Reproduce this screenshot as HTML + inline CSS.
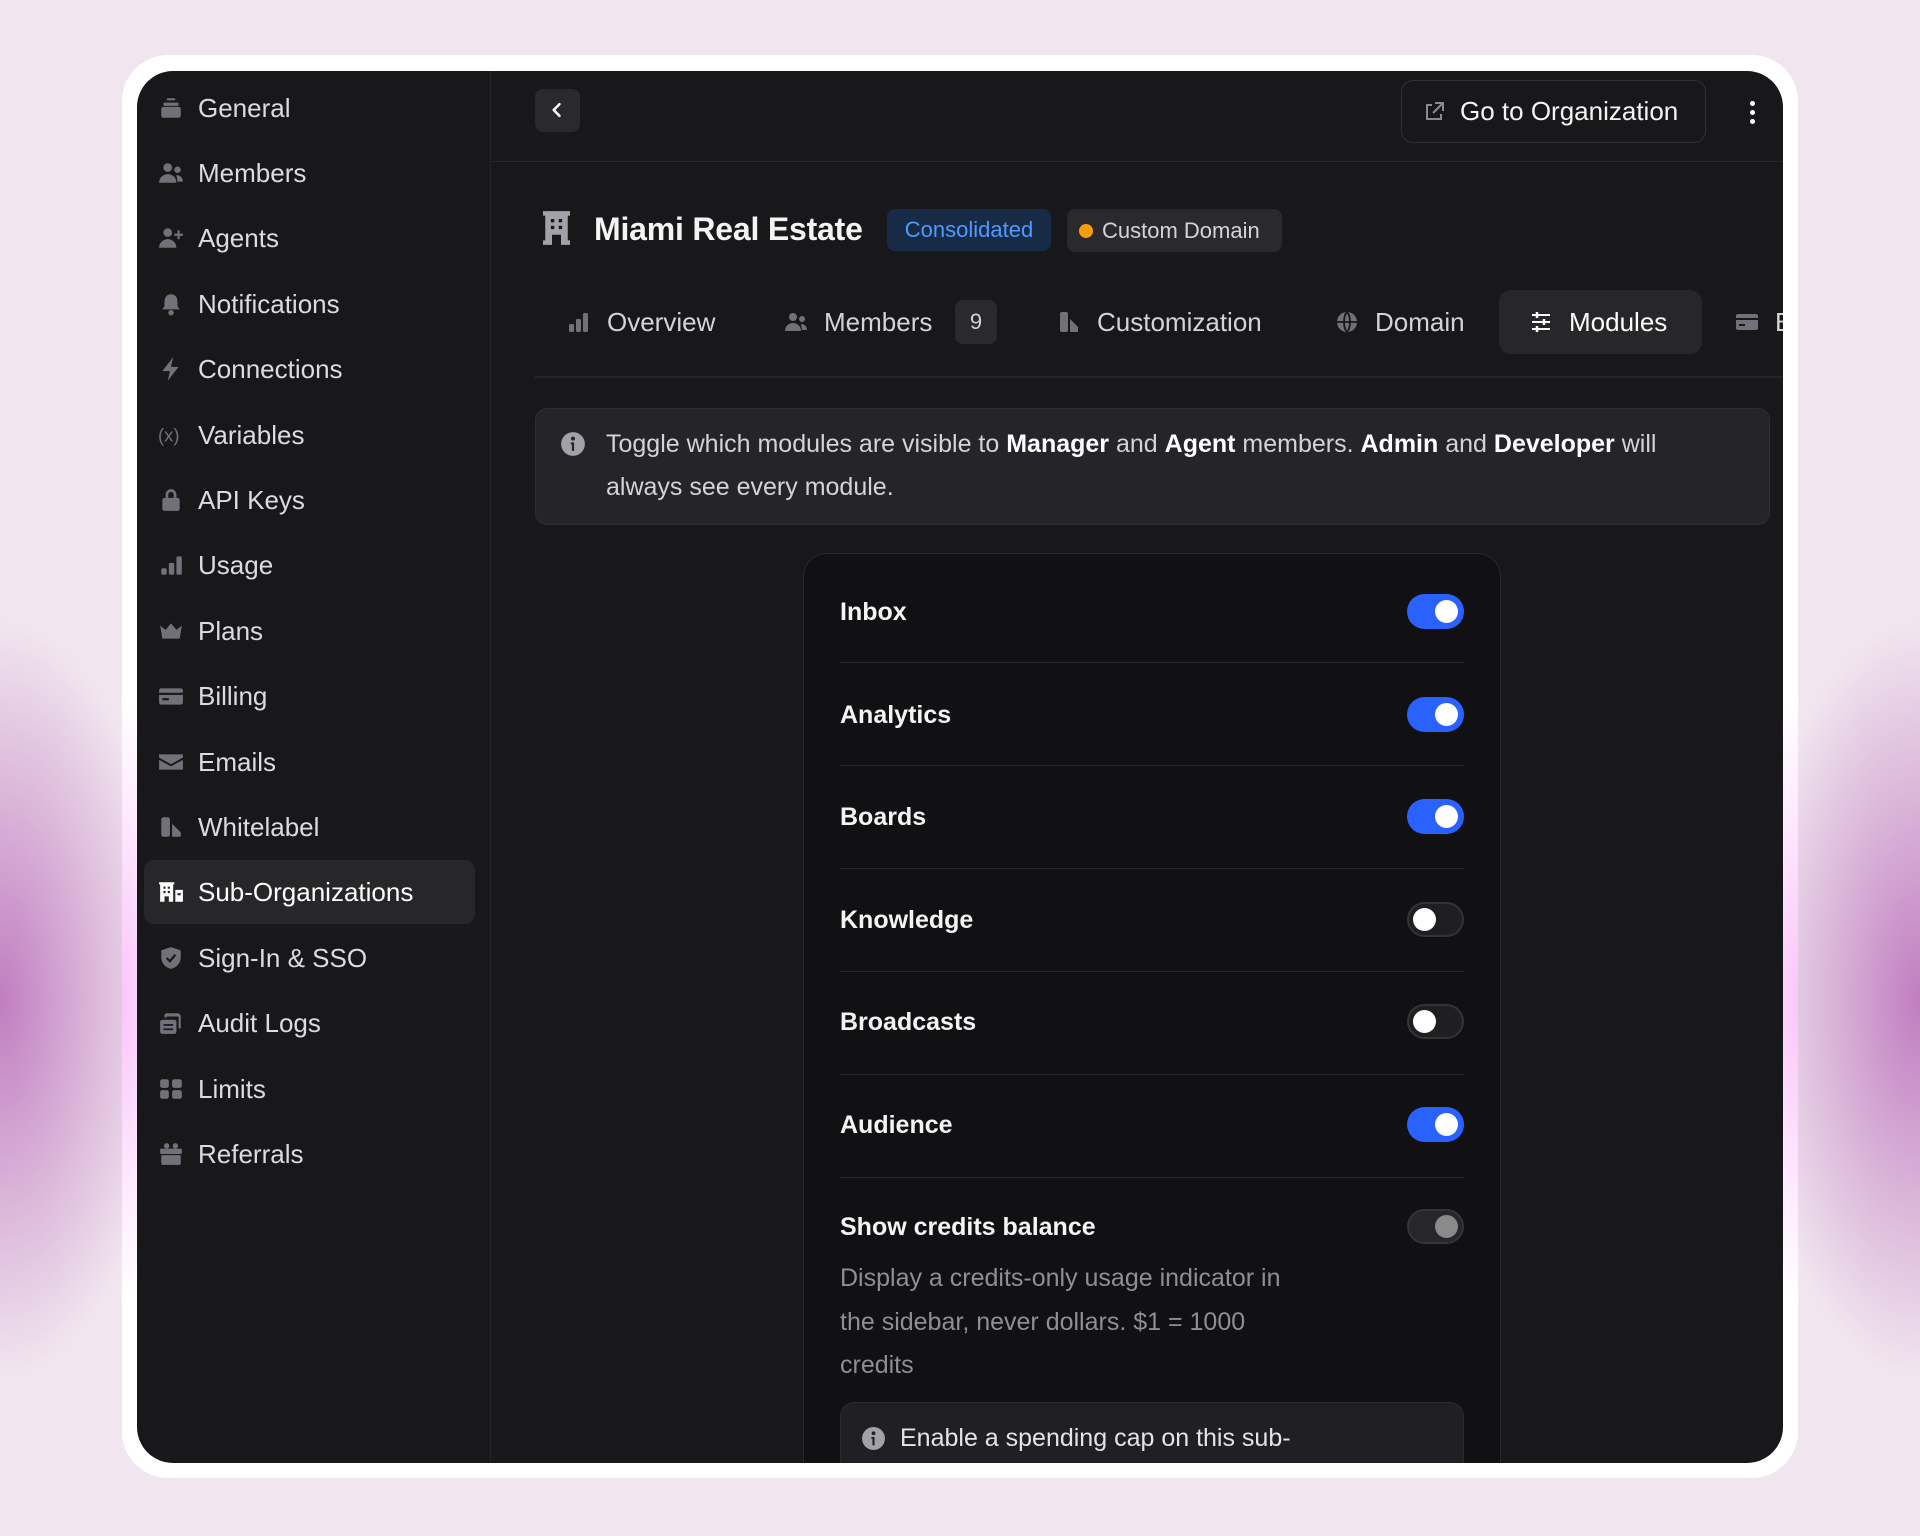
<!DOCTYPE html>
<html><head><meta charset="utf-8">
<style>
*{box-sizing:border-box;margin:0;padding:0}
html,body{width:1920px;height:1536px;overflow:hidden}
body{font-family:"Liberation Sans",sans-serif;position:relative;
background:
radial-gradient(ellipse 170px 380px at 0px 1000px, rgba(190,120,190,0.95), rgba(190,120,190,0) 100%),
radial-gradient(ellipse 170px 380px at 1920px 1000px, rgba(190,120,190,0.95), rgba(190,120,190,0) 100%),
linear-gradient(#f1e6ef,#f1e6ef);}
.card{position:absolute;left:122px;top:55px;width:1676px;height:1423px;border-radius:46px;background:#fff;}
.card:before{content:"";position:absolute;inset:0;border-radius:46px;
background:radial-gradient(ellipse 60px 300px at 0 945px,rgba(250,190,250,.9),rgba(255,255,255,0)),radial-gradient(ellipse 60px 300px at 100% 945px,rgba(250,190,250,.9),rgba(255,255,255,0));}
.panel{position:absolute;left:137px;top:71px;width:1646px;height:1392px;border-radius:36px;background:#18181b;overflow:hidden;color:#e4e4e7}
.side{position:absolute;left:0;top:0;width:354px;height:100%;border-right:1px solid #26262a}
.si{position:absolute;left:7px;width:331px;height:64px;border-radius:10px;display:flex;align-items:center;font-size:26px;color:#dcdce0}
.si svg{position:absolute;left:14px;width:26px;height:26px;fill:#71717a}
.si span{position:absolute;left:54px}
.si.act{background:#27272a;color:#fff}
.si.act svg{fill:#fff}
.abs{position:absolute}
.tab{position:absolute;top:290px;height:64px;display:flex;align-items:center;font-size:26px;color:#d4d4d8}
.tab svg{width:24px;height:24px;fill:#71717a;margin-right:16px}
.tgl{position:absolute;left:1270px;width:57px;height:35px;border-radius:18px}
.tgl.on{background:#2962ff}
.tgl.off{background:#1f1f22;border:2px solid #333338}
.tgl i{position:absolute;top:6px;width:23px;height:23px;border-radius:50%;background:#fff}
.tgl.on i{right:6px}
.tgl.off i{left:4px;top:4px}
.lbl{position:absolute;left:703px;font-size:25px;font-weight:bold;color:#f4f4f5}
.sep{position:absolute;left:703px;width:624px;height:1px;background:#27272a}
</style></head><body>
<div class="card"></div>
<div class="panel">
 <div class="side">
  <div class="si" style="top:5px"><svg viewBox="0 0 24 24"><rect x="3" y="11" width="18" height="10" rx="2"/><rect x="5" y="7" width="14" height="3" rx="1"/><rect x="8" y="3" width="8" height="2" rx="1"/></svg><span>General</span></div>
  <div class="si" style="top:70px"><svg viewBox="0 0 24 24"><circle cx="9" cy="7" r="4"/><path d="M1 21c0-5 4-8 8-8s8 3 8 8z"/><circle cx="18" cy="9" r="3"/><path d="M17 14c3 0 6 2 6 6h-5z"/></svg><span>Members</span></div>
  <div class="si" style="top:135px"><svg viewBox="0 0 24 24"><circle cx="9" cy="7" r="4"/><path d="M1 21c0-5 4-8 8-8s8 3 8 8z"/><path d="M18 5h2v3h3v2h-3v3h-2v-3h-3V8h3z"/></svg><span>Agents</span></div>
  <div class="si" style="top:201px"><svg viewBox="0 0 24 24"><path d="M12 3c4 0 6 3 6 7v4l2 3H4l2-3v-4c0-4 2-7 6-7z"/><circle cx="12" cy="20" r="2.5"/></svg><span>Notifications</span></div>
  <div class="si" style="top:266px"><svg viewBox="0 0 24 24"><path d="M14 1L4 14h7l-2 9 10-13h-7z"/></svg><span>Connections</span></div>
  <div class="si" style="top:332px"><svg viewBox="0 0 24 24"><text x="0" y="18" font-size="17" font-family="Liberation Sans" fill="#71717a">(x)</text></svg><span>Variables</span></div>
  <div class="si" style="top:397px"><svg viewBox="0 0 24 24"><rect x="4" y="10" width="16" height="12" rx="2"/><path d="M7 10V7a5 5 0 0110 0v3h-2.5V7a2.5 2.5 0 00-5 0v3z"/></svg><span>API Keys</span></div>
  <div class="si" style="top:462px"><svg viewBox="0 0 24 24"><rect x="3" y="15" width="5" height="6" rx="1.5"/><rect x="10" y="10" width="5" height="11" rx="1.5"/><rect x="17" y="4" width="5" height="17" rx="1.5"/></svg><span>Usage</span></div>
  <div class="si" style="top:528px"><svg viewBox="0 0 24 24"><path d="M2 7l5 4 5-6 5 6 5-4-2 12H4z"/></svg><span>Plans</span></div>
  <div class="si" style="top:593px"><svg viewBox="0 0 24 24"><rect x="1" y="5" width="22" height="15" rx="2"/><rect x="1" y="9" width="22" height="2" fill="#18181b"/><rect x="4" y="14" width="6" height="2" fill="#18181b"/></svg><span>Billing</span></div>
  <div class="si" style="top:659px"><svg viewBox="0 0 24 24"><path d="M1 5h22v3l-11 6L1 8z"/><path d="M1 10l11 6 11-6v9H1z"/></svg><span>Emails</span></div>
  <div class="si" style="top:724px"><svg viewBox="0 0 24 24"><rect x="3" y="3" width="8" height="18" rx="2"/><path d="M13 9l8 8v4h-8z"/></svg><span>Whitelabel</span></div>
  <div class="si act" style="top:789px"><svg viewBox="0 0 24 24"><path d="M1 3h14v2h-1v16h-4v-5H6v5H2V5H1z M5 7v2h2V7z M9 7v2h2V7z M5 11v2h2v-2z M9 11v2h2v-2z"/><path d="M16 10h7v11h-7z M18 13v2h3v-2z"/></svg><span>Sub-Organizations</span></div>
  <div class="si" style="top:855px"><svg viewBox="0 0 24 24"><path d="M12 2l9 3v6c0 6-4 10-9 11-5-1-9-5-9-11V5z"/><path d="M8 12l3 3 5-6" stroke="#18181b" stroke-width="2" fill="none"/></svg><span>Sign-In &amp; SSO</span></div>
  <div class="si" style="top:920px"><svg viewBox="0 0 24 24"><rect x="2" y="9" width="15" height="13" rx="2"/><path d="M6 7V5a2 2 0 012-2h10a3 3 0 013 3v11h-2V6H8v1z"/><rect x="5" y="13" width="9" height="1.6" fill="#18181b"/><rect x="5" y="17" width="9" height="1.6" fill="#18181b"/></svg><span>Audit Logs</span></div>
  <div class="si" style="top:986px"><svg viewBox="0 0 24 24"><rect x="2" y="3" width="8" height="8" rx="2"/><rect x="13" y="3" width="9" height="8" rx="2"/><rect x="2" y="13" width="8" height="8" rx="2"/><rect x="13" y="13" width="9" height="8" rx="2"/></svg><span>Limits</span></div>
  <div class="si" style="top:1051px"><svg viewBox="0 0 24 24"><rect x="2" y="7" width="20" height="5" rx="1"/><rect x="3" y="13" width="18" height="9" rx="1"/><circle cx="8" cy="4.5" r="2.5"/><circle cx="16" cy="4.5" r="2.5"/></svg><span>Referrals</span></div>
 </div>

 <div class="abs" style="left:355px;top:90px;width:1291px;height:1px;background:#26262a"></div>
 <div class="abs" style="left:398px;top:18px;width:45px;height:43px;border-radius:8px;background:#2a2a2e"><svg viewBox="0 0 24 24" style="position:absolute;left:12px;top:11px;width:20px;height:20px"><path d="M15 5l-7 7 7 7" stroke="#fff" stroke-width="3" fill="none" stroke-linecap="round" stroke-linejoin="round"/></svg></div>
 <div class="abs" style="left:1264px;top:9px;width:305px;height:63px;border-radius:12px;border:1px solid #303034;display:flex;align-items:center;font-size:26px;color:#f4f4f5"><svg viewBox="0 0 24 24" style="width:24px;height:24px;margin-left:20px;margin-right:14px"><path d="M10 5H5v14h14v-5" stroke="#8a8a92" stroke-width="2" fill="none"/><path d="M13 3h8v8M21 3l-10 10" stroke="#8a8a92" stroke-width="2" fill="none"/></svg>Go to Organization</div>
 <div class="abs" style="left:1613px;top:30px;width:6px;"><i style="display:block;width:5px;height:5px;border-radius:50%;background:#fff;margin-bottom:4px"></i><i style="display:block;width:5px;height:5px;border-radius:50%;background:#fff;margin-bottom:4px"></i><i style="display:block;width:5px;height:5px;border-radius:50%;background:#fff"></i></div>

 <svg class="abs" viewBox="0 0 24 30" style="left:406px;top:140px;width:27px;height:34px"><path d="M0 0h24v4h-2v22h2v4h-8v-9h-8v9H0v-4h2V4H0z" fill="#a1a1aa"/><rect x="7" y="7" width="3" height="3" fill="#18181b"/><rect x="14" y="7" width="3" height="3" fill="#18181b"/><rect x="7" y="13" width="3" height="3" fill="#18181b"/><rect x="14" y="13" width="3" height="3" fill="#18181b"/></svg>
 <div class="abs" style="left:457px;top:140px;font-size:32px;font-weight:bold;color:#f4f4f5;letter-spacing:-0.2px">Miami Real Estate</div>
 <div class="abs" style="left:750px;top:138px;width:164px;height:42px;border-radius:8px;background:#172a46;color:#4d9bff;font-size:22px;display:flex;align-items:center;justify-content:center">Consolidated</div>
 <div class="abs" style="left:930px;top:138px;width:215px;height:43px;border-radius:8px;background:#2a2a2e;color:#d4d4d8;font-size:22px;display:flex;align-items:center"><i style="width:14px;height:14px;border-radius:50%;background:#f59e0b;margin-left:12px;margin-right:9px"></i>Custom Domain</div>

 <div class="tab" style="left:430px;top:219px"><svg viewBox="0 0 24 24"><rect x="2" y="14" width="5" height="8" rx="1.5"/><rect x="9" y="9" width="5" height="13" rx="1.5"/><rect x="16" y="3" width="5" height="19" rx="1.5"/></svg>Overview</div>
 <div class="tab" style="left:647px;top:219px"><svg viewBox="0 0 24 24"><circle cx="9" cy="7" r="4"/><path d="M1 21c0-5 4-8 8-8s8 3 8 8z"/><circle cx="18" cy="9" r="3"/><path d="M17 14c3 0 6 2 6 6h-5z"/></svg>Members</div>
 <div class="abs" style="left:818px;top:229px;width:42px;height:44px;border-radius:8px;background:#2a2a2e;color:#d4d4d8;font-size:22px;display:flex;align-items:center;justify-content:center">9</div>
 <div class="tab" style="left:920px;top:219px"><svg viewBox="0 0 24 24"><rect x="3" y="2" width="8" height="20" rx="2"/><path d="M13 9l8 8v5h-8z"/></svg>Customization</div>
 <div class="tab" style="left:1198px;top:219px"><svg viewBox="0 0 24 24"><circle cx="12" cy="12" r="10"/><path d="M2 12h20M12 2c-4 4-4 16 0 20M12 2c4 4 4 16 0 20" stroke="#18181b" stroke-width="1.8" fill="none"/></svg>Domain</div>
 <div class="abs" style="left:1362px;top:219px;width:203px;height:64px;border-radius:12px;background:#27272a"></div>
 <div class="tab" style="left:1392px;top:219px;color:#fff"><svg viewBox="0 0 24 24" style="fill:none"><path d="M3 5h18M3 12h18M3 19h18" stroke="#fff" stroke-width="2"/><path d="M8 2v6M15 9v6M8 16v6" stroke="#fff" stroke-width="2.5"/></svg>Modules</div>
 <div class="tab" style="left:1598px;top:219px"><svg viewBox="0 0 24 24"><rect x="1" y="4" width="22" height="16" rx="2"/><rect x="1" y="8" width="22" height="2" fill="#18181b"/><rect x="4" y="14" width="6" height="2" fill="#18181b"/></svg>B</div>
 <div class="abs" style="left:398px;top:305px;width:1248px;height:2px;background:#26262a"></div>

 <div class="abs" style="left:398px;top:337px;width:1235px;height:117px;border-radius:12px;background:#242429;border:1px solid #2e2e33"></div>
 <svg class="abs" viewBox="0 0 24 24" style="left:423px;top:360px;width:26px;height:26px"><circle cx="12" cy="12" r="11" fill="#a1a1aa"/><circle cx="12" cy="7" r="1.8" fill="#242429"/><path d="M10 10.5h3v8h-2v-6h-1z" fill="#242429"/></svg>
 <div class="abs" style="left:469px;top:352px;width:1110px;font-size:25px;line-height:43px;color:#d4d4d8">Toggle which modules are visible to <b style="color:#fff">Manager</b> and <b style="color:#fff">Agent</b> members. <b style="color:#fff">Admin</b> and <b style="color:#fff">Developer</b> will always see every module.</div>

 <div class="abs" style="left:666px;top:482px;width:698px;height:1000px;border-radius:24px;background:#111113;border:1px solid #2a2a2e"></div>
 <div class="lbl" style="top:527px">Inbox</div><div class="tgl on" style="top:523px"><i></i></div>
 <div class="sep" style="top:591px"></div>
 <div class="lbl" style="top:630px">Analytics</div><div class="tgl on" style="top:626px"><i></i></div>
 <div class="sep" style="top:694px"></div>
 <div class="lbl" style="top:732px">Boards</div><div class="tgl on" style="top:728px"><i></i></div>
 <div class="sep" style="top:797px"></div>
 <div class="lbl" style="top:835px">Knowledge</div><div class="tgl off" style="top:831px"><i></i></div>
 <div class="sep" style="top:900px"></div>
 <div class="lbl" style="top:937px">Broadcasts</div><div class="tgl off" style="top:933px"><i></i></div>
 <div class="sep" style="top:1003px"></div>
 <div class="lbl" style="top:1040px">Audience</div><div class="tgl on" style="top:1036px"><i></i></div>
 <div class="sep" style="top:1106px"></div>
 <div class="lbl" style="top:1142px">Show credits balance</div><div class="tgl off" style="top:1138px;background:#27272a"><i style="left:auto;right:4px;background:#8a8a8a"></i></div>
 <div class="abs" style="left:703px;top:1186px;width:560px;font-size:25px;line-height:43.5px;color:#8e8e96">Display a credits-only usage indicator in<br>the sidebar, never dollars. $1 = 1000<br>credits</div>
 <div class="abs" style="left:703px;top:1331px;width:624px;height:100px;border-radius:14px;background:#202024;border:1px solid #2a2a2e"></div>
 <svg class="abs" viewBox="0 0 24 24" style="left:724px;top:1355px;width:25px;height:25px"><circle cx="12" cy="12" r="11" fill="#a1a1aa"/><circle cx="12" cy="7" r="1.8" fill="#202024"/><path d="M10 10.5h3v8h-2v-6h-1z" fill="#202024"/></svg>
 <div class="abs" style="left:763px;top:1353px;font-size:25px;color:#e4e4e7">Enable a spending cap on this sub-</div>
</div>
</body></html>
